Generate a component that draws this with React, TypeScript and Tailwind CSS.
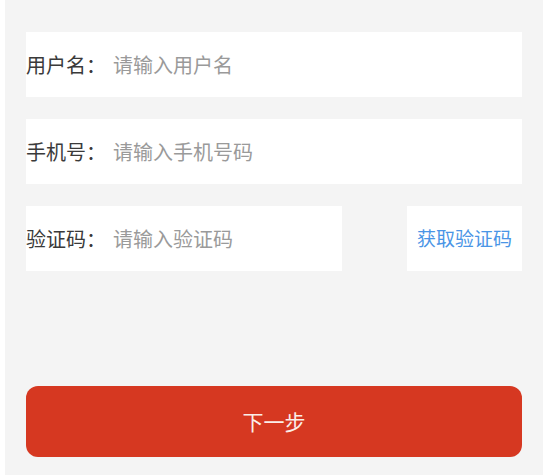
export default function App() {
  return (
    <div className="h-[475px] w-[551px] bg-white">
      <div
        className="ml-[5px] h-full w-[538px] bg-[#f4f4f4] px-[21px] pt-[32px]"
        style={{ fontFamily: '"Noto Sans CJK SC", "Noto Sans", sans-serif' }}
      >
        <div className="flex flex-col gap-[22px]">
          <div className="flex h-[65px] items-center bg-white text-[20px]">
            <span className="w-[87px] text-[#3a3a3a]">用户名：</span>
            <input
              className="flex-1 bg-transparent text-[#3a3a3a] outline-none placeholder:text-[#9a9a9a]"
              placeholder="请输入用户名"
            />
          </div>
          <div className="flex h-[65px] items-center bg-white text-[20px]">
            <span className="w-[87px] text-[#3a3a3a]">手机号：</span>
            <input
              className="flex-1 bg-transparent text-[#3a3a3a] outline-none placeholder:text-[#9a9a9a]"
              placeholder="请输入手机号码"
            />
          </div>
          <div className="flex h-[65px] items-stretch justify-between text-[20px]">
            <div className="flex w-[316px] items-center bg-white">
              <span className="w-[87px] text-[#3a3a3a]">验证码：</span>
              <input
                className="min-w-0 flex-1 bg-transparent text-[#3a3a3a] outline-none placeholder:text-[#9a9a9a]"
                placeholder="请输入验证码"
              />
            </div>
            <button className="w-[115px] bg-white text-[19px] text-[#4a95e6]">获取验证码</button>
          </div>
        </div>
        <button className="mt-[115px] h-[71px] w-full rounded-[12px] bg-[#d63821] text-[21px] text-[#fbeee9]">
          下一步
        </button>
      </div>
    </div>
  );
}
